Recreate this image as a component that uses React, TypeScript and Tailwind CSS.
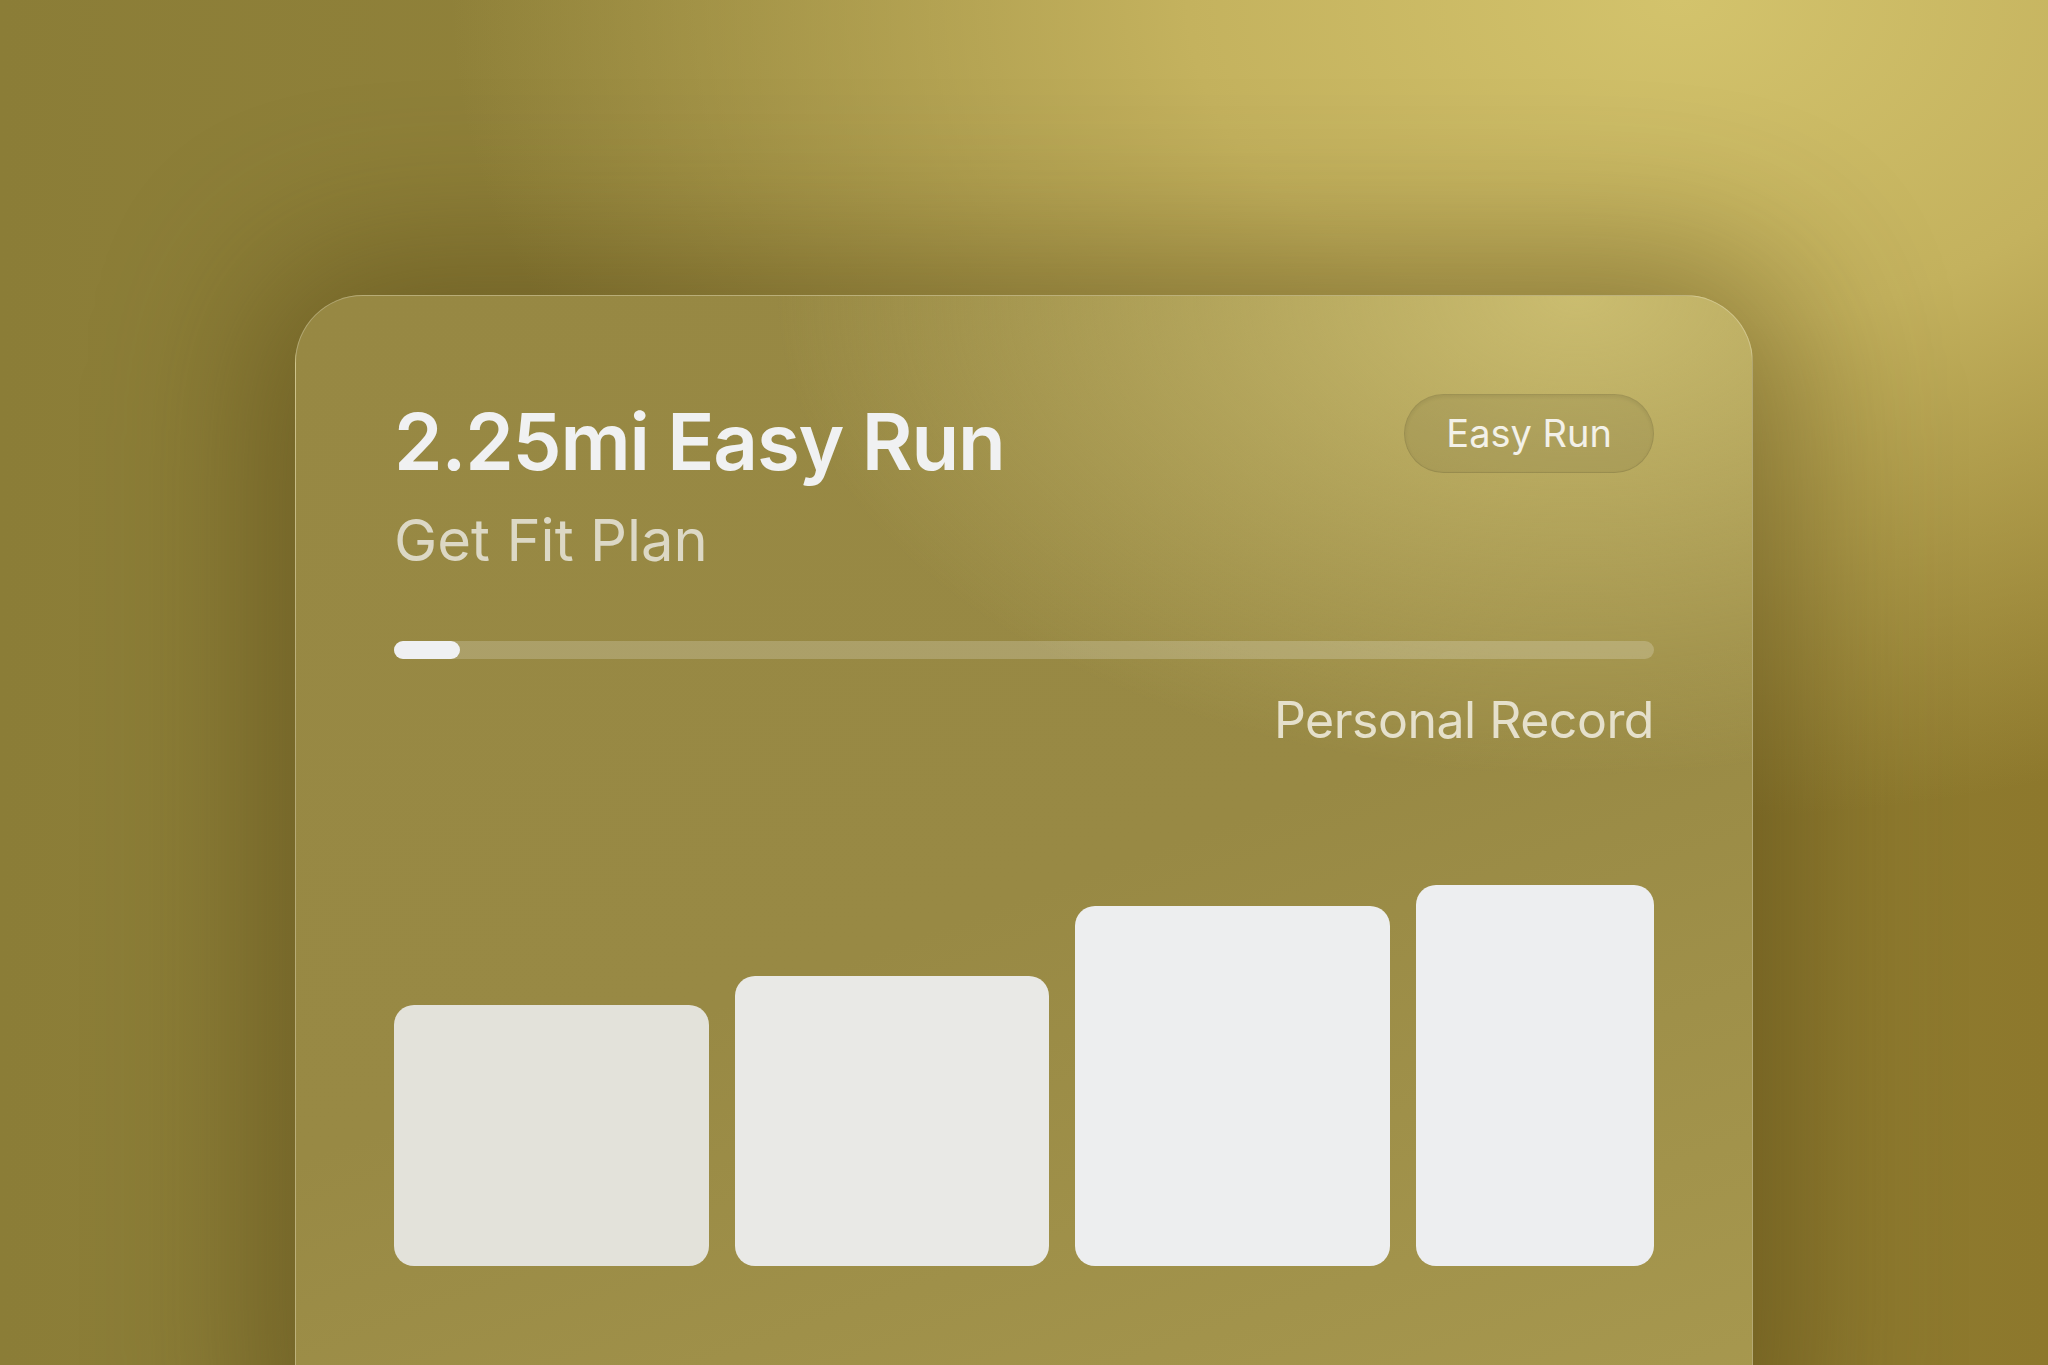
const bars = [
  { w: 'w-[315px]', h: 'h-[261px]', c: 'bg-[#e3e2da]' },
  { w: 'w-[315px]', h: 'h-[290px]', c: 'bg-[#e9e9e6]' },
  { w: 'w-[315px]', h: 'h-[360px]', c: 'bg-[#edeeef]' },
  { w: 'w-[238px]', h: 'h-[381px]', c: 'bg-[#edeef0]' },
];

export default function App() {
  return (
    <div
      className="h-[1365px] w-[2048px] overflow-hidden bg-[radial-gradient(ellipse_60%_60%_at_82%_0%,#d3c36c_0%,#c4b25e_40%,rgba(196,178,94,0)_100%),linear-gradient(90deg,#8b7d37_0%,#94853c_50%,#8d782c_100%)] pl-[295px] pt-[295px]"
      style={{ fontFamily: 'Inter, "Noto Sans", sans-serif' }}
    >
      <div className="h-[1200px] w-[1458px] rounded-[68px] border-[1.5px] border-white/25 bg-[radial-gradient(ellipse_55%_40%_at_88%_0%,rgba(208,194,116,0.9)_0%,rgba(208,194,116,0)_100%),linear-gradient(160deg,#978843_0%,#988944_50%,#a99a50_100%)] px-[98px] pt-[98px] shadow-[0_0_160px_40px_rgba(70,56,12,0.45)]">
        <div className="flex items-start justify-between">
          <div className="pt-[9px]">
            <h1 className="text-[78px] font-semibold leading-none tracking-[-0.015em] text-[#f0f1f2]">
              2.25mi Easy Run
            </h1>
            <p className="mt-[30px] text-[58px] leading-none text-[#dcd8c5]">
              Get Fit Plan
            </p>
          </div>
          <span className="flex h-[79px] items-center rounded-full border border-black/10 bg-black/[0.07] px-[41px] text-[38px] text-[#f3f1e8] shadow-[inset_0_2px_5px_rgba(0,0,0,0.08)]">
            Easy Run
          </span>
        </div>

        <div className="mt-[72px] h-[18px] w-full rounded-full bg-white/20">
          <div className="h-full w-[66px] rounded-full bg-[#eff0f2]" />
        </div>

        <p className="mt-[36px] text-right text-[50px] leading-none tracking-[-0.01em] text-[#e5e0cb]">
          Personal Record
        </p>

        <div className="mt-[140px] flex h-[381px] items-end gap-[26px]">
          {bars.map((b, i) => (
            <div key={i} className={`${b.w} ${b.h} ${b.c} rounded-[20px]`} />
          ))}
        </div>
      </div>
    </div>
  );
}
